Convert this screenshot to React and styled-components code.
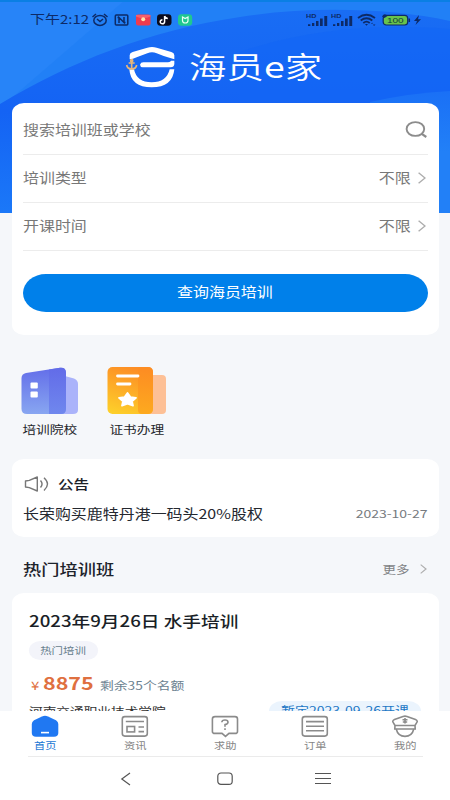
import React from "react";
import styled, { createGlobalStyle, css } from "styled-components";

const GlobalStyle = createGlobalStyle`
  * {
    box-sizing: border-box;
  }
  body {
    margin: 0;
    background: #fff;
    font-family: "Noto Sans CJK SC", "Noto Sans", sans-serif;
  }
`;

// the interface font is wide, so the text is widened from one edge
const wide = (x, origin = "left") => css`
  display: inline-block;
  white-space: nowrap;
  transform: scaleX(${x});
  transform-origin: ${origin} center;
`;

const tabs = [
  { label: "首页", icon: "home", active: true },
  { label: "资讯", icon: "news" },
  { label: "求助", icon: "help" },
  { label: "订单", icon: "orders" },
  { label: "我的", icon: "me" },
];

const filters = ["培训类型", "开课时间"];

const HeroArt = () => (
  <Art viewBox="0 0 450 213" preserveAspectRatio="none">
    <defs>
      <linearGradient id="deep" x1="0" y1="0" x2="0" y2="1">
        <stop offset="0" stopColor="#196df4" />
        <stop offset="0.5" stopColor="#1463f4" />
        <stop offset="1" stopColor="#1b78f8" />
      </linearGradient>
      <linearGradient id="corner" x1="0" y1="0" x2="0" y2="1">
        <stop offset="0" stopColor="#1a70f6" />
        <stop offset="0.5" stopColor="#2280f7" />
      </linearGradient>
    </defs>
    <rect width="450" height="213" fill="#2180f6" />
    <path d="M0 108L125 0H0Z" fill="#2784f8" />
    <path d="M0 104C70 62 150 30 240 17C310 6 390 8 450 21V213H0Z" fill="url(#deep)" />
    <path d="M240 52C310 28 380 24 450 29V100H240Z" fill="#1265f5" opacity="0.6" />
    <path d="M370 102Q410 93 450 91V213H370Z" fill="url(#corner)" />
    <rect width="450" height="2" fill="#0a7fe4" />
  </Art>
);

const StatusLeftIcons = () => (
  <svg width="102" height="16" viewBox="0 0 102 16">
    <g fill="none" stroke="#0d2a66" strokeWidth="1.5">
      <ellipse cx="9" cy="8.4" rx="6.2" ry="5" />
      <path d="M1.5 5L5 2M16.5 5L13 2M6 7L9 9.5L12 7" />
      <rect x="24.3" y="3" width="12.5" height="10" rx="1" />
      <path d="M28 11V5.5L33 10.5V5M28 5.5H26.5M33 10.5H34.5" />
    </g>
    <rect x="45" y="2.5" width="14.5" height="11" rx="2" fill="#ef3b4e" />
    <path d="M45 4.5Q52 8 59.5 4.5V3H45Z" fill="#f5606a" />
    <circle cx="52.2" cy="7.3" r="2" fill="#ffe2a8" />
    <rect x="66" y="2.3" width="14.5" height="11.4" rx="3.4" fill="#0b0b1d" />
    <path d="M73.6 4V9.7A2.2 2 0 1 1 71.4 7.8M73.6 4Q74.2 6.3 76.8 6.4" fill="none" stroke="#fff" strokeWidth="1.5" />
    <rect x="87" y="2.3" width="14.2" height="11.4" rx="3.4" fill="#1fc890" />
    <path d="M91.5 5V8.5Q91.5 11 94.2 11Q97 11 97 8.5V5L94.2 6.6Z" fill="none" stroke="#e9fff5" strokeWidth="1.2" />
  </svg>
);

const Signal = () => (
  <SignalBox>
    <HdMark>HD</HdMark>
    <svg width="21" height="12" viewBox="0 0 21 12">
      <path d="M1 11V9.3H3.3V11ZM5 11V8H7.3V11ZM9 11V6H11.5V11ZM13 11V3.5H15.7V11ZM17.3 11V1H20.2V11Z" fill="#0d2a66" />
    </svg>
  </SignalBox>
);

const WifiIcon = () => (
  <svg width="20" height="14" viewBox="0 0 20 14">
    <g fill="none" stroke="#0d2a66" strokeWidth="1.8">
      <path d="M1 5Q9.5 -1.5 18 5" />
      <path d="M3.7 7.5Q9.5 3 15.3 7.5" />
      <path d="M6.3 10Q9.5 7.3 12.7 10" />
    </g>
    <path d="M8 11H11L9.5 12.8ZM14 11L15.5 9.5V11ZM16 11.5H18.5L17 13Z" fill="#0d2a66" />
  </svg>
);

const BatteryShell = () => (
  <svg width="41" height="14" viewBox="0 0 41 14">
    <rect x="2.2" y="2.4" width="24.5" height="9.6" rx="3" fill="#68c34b" stroke="#0d2a66" strokeWidth="1.2" />
    <path d="M28.3 5.5V9" stroke="#0d2a66" strokeWidth="1.5" />
    <path d="M1 3.5Q3.5 -0.5 6.5 3L3.5 5Z" fill="#0d2a66" />
    <path d="M38 2L33 8H36L34.5 12L40 6.2H37Z" fill="#0d2a66" />
  </svg>
);

const LogoIcon = () => (
  <svg width="50" height="42" viewBox="375 140 150 126">
    <g fill="#fff">
      <path d="M389 180V168Q389 161 398 158L442 145Q456 141 470 145L514 158Q523 161 523 168V180Q492 172 470 162Q456 156 442 162L410 174Q398 180 389 180Z" />
      <path d="M420 196Q422 189 430 189H498Q511 189 513 184H523V194Q522 204 512 204H428Q421 204 420 196Z" />
      <path d="M388 210H402Q410 249 455 249Q500 249 509 210H523Q518 264 455 264Q392 264 388 210Z" />
    </g>
    <g fill="none" stroke="#e8b77a" strokeWidth="5">
      <path d="M395 188V208M386 191H404M380 197Q382 209 395 209Q408 209 410 197" />
      <circle cx="395" cy="184" r="3" />
    </g>
  </svg>
);

const SearchIcon = () => (
  <svg width="23" height="18" viewBox="0 0 23 18" fill="none" stroke="#8c8c8c">
    <ellipse cx="10.4" cy="8" rx="8.8" ry="6.9" strokeWidth="1.9" />
    <path d="M16.4 12.7L21.3 16" strokeWidth="2.2" />
  </svg>
);

const Chevron = ({ small }) => (
  <svg width={small ? 7 : 8} height={small ? 10 : 12} viewBox="0 0 8 12" fill="none" stroke="#adadad" strokeWidth="1.4">
    <path d="M0.6 0.8L7 6L0.6 11.2" />
  </svg>
);

const SchoolIcon = () => (
  <svg width="57" height="48" viewBox="0 0 57 48">
    <defs>
      <linearGradient id="school" x1="0" y1="0" x2="0" y2="1">
        <stop offset="0" stopColor="#636ee9" />
        <stop offset="1" stopColor="#88a6f1" />
      </linearGradient>
      <linearGradient id="schoolSide" x1="0" y1="0" x2="0" y2="1">
        <stop offset="0" stopColor="#626be8" />
        <stop offset="1" stopColor="#6b82ed" />
      </linearGradient>
    </defs>
    <path d="M40 8L53 11.5Q57 13 57 17V43Q57 47 52 47H40Z" fill="#aab3fa" />
    <path d="M5 6L39 0.7Q45 0 45 6V42Q45 47 40 47H6Q0.5 47 0.5 42V11Q0.5 7 5 6Z" fill="url(#school)" />
    <path d="M28 2.5L39 0.7Q45 0 45 6V42Q45 47 40 47H28Z" fill="url(#schoolSide)" opacity="0.85" />
    <rect x="9.5" y="15.5" width="7.3" height="6" rx="1" fill="#fff" />
    <rect x="9.5" y="24.5" width="7.3" height="6" rx="1" fill="#fff" />
  </svg>
);

const CertificateIcon = () => (
  <svg width="60" height="48" viewBox="0 0 60 48">
    <defs>
      <linearGradient id="cert" x1="0.5" y1="0" x2="0.2" y2="1">
        <stop offset="0" stopColor="#fd8e25" />
        <stop offset="1" stopColor="#fdcf2a" />
      </linearGradient>
      <linearGradient id="certSide" x1="0" y1="0" x2="0" y2="1">
        <stop offset="0" stopColor="#fd8c22" />
        <stop offset="1" stopColor="#fda51d" />
      </linearGradient>
    </defs>
    <path d="M40 8H55Q59 8 59 12V43Q59 47 55 47H40Z" fill="#fdc096" />
    <rect x="0.5" y="0" width="45.5" height="47" rx="5" fill="url(#cert)" />
    <path d="M31 0H41Q46 0 46 5V42Q46 47 41 47H35Q31 47 31 43Z" fill="url(#certSide)" opacity="0.85" />
    <path d="M10.5 9H31M10.5 17H23" stroke="#fff" strokeWidth="2.8" strokeLinecap="round" />
    <path d="M20.5 26L23.4 30.1L29 30.8L25 34.2L26 38.6L20.5 36.6L15 38.6L16 34.2L12 30.8L17.6 30.1Z" fill="#fff" stroke="#fff" strokeWidth="1.8" strokeLinejoin="round" />
  </svg>
);

const SpeakerIcon = () => (
  <svg width="26" height="18" viewBox="0 0 26 18" fill="none" stroke="#777" strokeWidth="1.4">
    <path d="M1.5 6L5.3 5.4L13.3 2V16L5.3 12.6L1.5 12Z" strokeLinejoin="round" />
    <path d="M16.5 5.5Q19.6 9 16.5 12.5M20 2.7Q27 9 20 15.5" />
  </svg>
);

const TabIcon = ({ name }) => {
  if (name === "home") {
    return (
      <svg width="28" height="23" viewBox="0 0 28 23">
        <path d="M3 5.3L11 1.4Q14 0.1 17 1.4L25 5.3Q27.3 6.7 27.3 9V18Q27.3 21.7 23 21.7H5Q0.8 21.7 0.8 18V9Q0.8 6.7 3 5.3Z" fill="#2078f2" />
        <path d="M10 17.6H18" stroke="#fff" strokeWidth="1.6" />
      </svg>
    );
  }
  return (
    <svg width="28" height="23" viewBox="0 0 28 23" fill="none" stroke="#8b8b8b" strokeWidth="1.6">
      {name === "news" && (
        <>
          <rect x="1.3" y="1.6" width="25" height="19.5" rx="2.5" />
          <path d="M4.8 6.5H23M17.5 12H23M17.5 16.6H23" />
          <rect x="6" y="11.5" width="7.6" height="5.4" />
        </>
      )}
      {name === "help" && (
        <>
          <path d="M4 1.6H24Q26.5 1.6 26.5 4V16.4Q26.5 18.4 24 18.4H18L14.5 21.4L11 18.4H4Q1.4 18.4 1.4 16.4V4Q1.4 1.6 4 1.6Z" />
          <path d="M10.8 7.2Q11 5 14 5Q17 5 17 7.2Q17 9 14 9.6V11.7M14 13.2V15" />
        </>
      )}
      {name === "orders" && (
        <>
          <rect x="1.3" y="1.6" width="25" height="19.5" rx="2.5" />
          <path d="M5 6.6H23M5 11.3H23M5 15.8H23" />
        </>
      )}
      {name === "me" && (
        <>
          <path d="M4 10.5L1.8 6.8Q1.5 5.4 3.5 4.5L12 1.4Q14 0.8 16 1.4L24.5 4.5Q26.5 5.4 26.2 6.8L24 10.5ZM4 10.5L3.8 14H24.2L24 10.5" />
          <path d="M5.2 14Q7 21.4 14 21.4Q21 21.4 22.8 14" />
          <path d="M14 3V8.5M11.5 4.8H16.5M11.8 7H16.2" />
        </>
      )}
    </svg>
  );
};

const App = () => {
  return (
    <Phone>
      <GlobalStyle />
      <Page>
        <Hero>
          <HeroArt />
          <StatusBar>
            <Clock>下午2:12</Clock>
            <StatusLeftIcons />
            <StatusRight>
              <Signal />
              <Signal />
              <WifiIcon />
              <Battery>
                <BatteryShell />
                <Charge>100</Charge>
              </Battery>
            </StatusRight>
          </StatusBar>
          <Brand>
            <LogoIcon />
            <BrandName>
              海员<BrandLetter>e</BrandLetter>家
            </BrandName>
          </Brand>
        </Hero>

        <SearchCard>
          <FormRow>
            <FieldText>搜索培训班或学校</FieldText>
            <SearchIcon />
          </FormRow>
          {filters.map((name) => (
            <FormRow key={name}>
              <FieldText>{name}</FieldText>
              <FieldValue>
                <ValueText>不限</ValueText>
                <Chevron />
              </FieldValue>
            </FormRow>
          ))}
          <SearchButton>
            <ButtonText>查询海员培训</ButtonText>
          </SearchButton>
        </SearchCard>

        <Shortcuts>
          <Shortcut>
            <SchoolIcon />
            <ShortcutLabel>培训院校</ShortcutLabel>
          </Shortcut>
          <Shortcut>
            <CertificateIcon />
            <ShortcutLabel>证书办理</ShortcutLabel>
          </Shortcut>
        </Shortcuts>

        <NoticeCard>
          <NoticeHead>
            <SpeakerIcon />
            <NoticeTitle>公告</NoticeTitle>
          </NoticeHead>
          <NoticeRow>
            <NoticeText>长荣购买鹿特丹港一码头20%股权</NoticeText>
            <NoticeDate>2023-10-27</NoticeDate>
          </NoticeRow>
        </NoticeCard>

        <SectionHead>
          <SectionTitle>热门培训班</SectionTitle>
          <More>
            <MoreText>更多</MoreText>
            <Chevron small />
          </More>
        </SectionHead>

        <CourseCard>
          <CourseTitle>2023年9月26日 水手培训</CourseTitle>
          <Tag>
            <TagText>热门培训</TagText>
          </Tag>
          <PriceRow>
            <Currency>¥</Currency>
            <Price>8875</Price>
            <Remaining>剩余35个名额</Remaining>
          </PriceRow>
          <CourseFoot>
            <School>河南交通职业技术学院</School>
            <StartBadge>
              <StartText>暂定2023-09-26开课</StartText>
            </StartBadge>
          </CourseFoot>
        </CourseCard>
      </Page>

      <Footer>
        <TabBar>
          {tabs.map((tab) => (
            <Tab key={tab.icon}>
              <TabIcon name={tab.icon} />
              <TabLabel $active={tab.active}>{tab.label}</TabLabel>
            </Tab>
          ))}
        </TabBar>
        <Divider />
        <SystemNav>
          <svg width="16" height="16" viewBox="0 0 16 16">
            <path d="M12 2L3.8 8L12 14" />
          </svg>
          <svg width="16" height="16" viewBox="0 0 16 16">
            <rect x="0.8" y="2" width="14.4" height="11.4" rx="3.2" />
          </svg>
          <svg width="16" height="16" viewBox="0 0 16 16">
            <path d="M0 2.5H16M0 7.5H16M0 12.5H16" />
          </svg>
        </SystemNav>
      </Footer>
    </Phone>
  );
};

const Phone = styled.div`
  width: 450px;
  height: 800px;
  display: flex;
  flex-direction: column;
  overflow: hidden;
  background: #fff;
`;

const Page = styled.main`
  height: 711px;
  overflow: hidden;
  background: #f5f7fa;
`;

const Hero = styled.header`
  position: relative;
  height: 213px;
`;

const Art = styled.svg`
  position: absolute;
  inset: 0;
  width: 100%;
  height: 100%;
`;

const StatusBar = styled.div`
  position: relative;
  display: flex;
  align-items: center;
  height: 39px;
  padding: 0 28px 0 30px;
`;

const Clock = styled.span`
  ${wide(1.25)}
  width: 61px;
  margin-top: -1px;
  font-size: 12px;
  line-height: 16px;
  color: #0d2a66;
`;

const StatusRight = styled.div`
  display: flex;
  align-items: center;
  gap: 4px;
  margin-left: auto;
`;

const SignalBox = styled.div`
  position: relative;
  display: flex;
  height: 14px;
  align-items: flex-end;
`;

const HdMark = styled.span`
  ${wide(1.3)}
  position: absolute;
  left: -1px;
  top: 0;
  font: bold 5.5px/6px "Liberation Sans", sans-serif;
  color: #0d2a66;
`;

const Battery = styled.div`
  position: relative;
  display: flex;
`;

const Charge = styled.span`
  ${wide(1.25)}
  position: absolute;
  left: 6px;
  top: 3px;
  font: 8px/9px "Liberation Sans", sans-serif;
  color: #0d3a3a;
`;

const Brand = styled.div`
  position: relative;
  display: flex;
  align-items: center;
  gap: 14px;
  height: 56px;
  padding-left: 125px;
`;

const BrandName = styled.h1`
  ${wide(1.27)}
  margin: -4px 0 0;
  font-size: 29.5px;
  line-height: 40px;
  font-weight: 350;
  color: #fff;
`;

const BrandLetter = styled.span`
  font-weight: 400;
`;

const Card = styled.section`
  position: relative;
  margin: 0 11px 0 12px;
  border-radius: 12px / 10px;
  background: #fff;
`;

const SearchCard = styled(Card)`
  height: 232px;
  margin-top: -110px;
  padding: 4px 11px 0;
`;

const FormRow = styled.div`
  display: flex;
  align-items: center;
  justify-content: space-between;
  height: 48px;
  padding-bottom: 2px;
  border-bottom: 1px solid #ececec;
`;

const FieldText = styled.span`
  ${wide(1.2)}
  font-size: 13.3px;
  color: #777;
`;

const FieldValue = styled.div`
  display: flex;
  align-items: center;
  gap: 7px;
  padding-right: 2px;
`;

const ValueText = styled.span`
  ${wide(1.2, "right")}
  font-size: 13.3px;
  color: #777;
`;

const SearchButton = styled.button`
  width: 100%;
  height: 38px;
  margin-top: 23px;
  padding: 0 2px 3px 0;
  border: 0;
  border-radius: 23px / 19px;
  background: #0080ea;
  font-family: inherit;
`;

const ButtonText = styled.span`
  ${wide(1.2, "center")}
  font-size: 13.3px;
  line-height: 18px;
  color: #fff;
`;

const Shortcuts = styled.nav`
  display: flex;
  gap: 29px;
  height: 124px;
  padding: 32px 21px 0;
`;

const Shortcut = styled.div`
  display: flex;
  flex-direction: column;
  align-items: center;
`;

const ShortcutLabel = styled.span`
  ${wide(1.2, "center")}
  margin-top: 6px;
  font-size: 11.4px;
  line-height: 16px;
  color: #24262b;
`;

const NoticeCard = styled(Card)`
  height: 78px;
  padding: 14px 12px 0 11px;
`;

const NoticeHead = styled.div`
  display: flex;
  align-items: center;
  gap: 8px;
  height: 22px;
  padding-left: 1px;
`;

const NoticeTitle = styled.h2`
  ${wide(1.2)}
  margin: -1px 0 0;
  font-size: 13px;
  line-height: 18px;
  font-weight: 500;
  color: #1a2029;
`;

const NoticeRow = styled.div`
  display: flex;
  align-items: center;
  justify-content: space-between;
  height: 36px;
`;

const NoticeText = styled.span`
  ${wide(1.2)}
  font-size: 13.3px;
  color: #24282f;
`;

const NoticeDate = styled.span`
  ${wide(1.25, "right")}
  font-size: 11.2px;
  color: #777b80;
`;

const SectionHead = styled.div`
  display: flex;
  align-items: center;
  justify-content: space-between;
  height: 56px;
  padding: 7px 23px 0;
`;

const SectionTitle = styled.h2`
  ${wide(1.2)}
  margin: -2px 0 0;
  font-size: 15.2px;
  line-height: 22px;
  font-weight: 500;
  color: #1d232b;
`;

const More = styled.div`
  display: flex;
  align-items: center;
  gap: 10px;
`;

const MoreText = styled.span`
  ${wide(1.2, "right")}
  font-size: 11.3px;
  color: #808285;
`;

const CourseCard = styled(Card)`
  height: 160px;
  padding: 16px 18px 0 17px;
`;

const CourseTitle = styled.h3`
  ${wide(1.22)}
  display: block;
  width: 180px;
  margin: 0;
  font-size: 15.3px;
  line-height: 22px;
  font-weight: 500;
  color: #1a1f27;
`;

const Tag = styled.div`
  display: flex;
  align-items: center;
  justify-content: center;
  width: 69px;
  height: 19px;
  margin-top: 10px;
  padding-bottom: 1px;
  border-radius: 12px / 10px;
  background: #f3f4fa;
`;

const TagText = styled.span`
  ${wide(1.2, "center")}
  font-size: 9.5px;
  line-height: 14px;
  color: #667d8c;
`;

const PriceRow = styled.div`
  display: flex;
  align-items: baseline;
  height: 24px;
  margin-top: 11px;
  padding-left: 2px;
  line-height: 24px;
`;

const Currency = styled.span`
  ${wide(1.25)}
  width: 12px;
  font-size: 12px;
  color: #e07042;
`;

const Price = styled.span`
  ${wide(1.25)}
  width: 57px;
  font-size: 17.2px;
  font-weight: 700;
  color: #df7040;
`;

const Remaining = styled.span`
  ${wide(1.2)}
  font-size: 11.5px;
  color: #6b8290;
`;

const CourseFoot = styled.div`
  display: flex;
  justify-content: space-between;
  height: 20px;
  margin-top: 6px;
`;

const School = styled.span`
  ${wide(1.2)}
  font-size: 11.4px;
  line-height: 20px;
  color: #333;
`;

const StartBadge = styled.div`
  display: flex;
  justify-content: center;
  width: 152px;
  height: 20px;
  border-radius: 13px / 10px;
  background: #ebf4fd;
`;

const StartText = styled.span`
  ${wide(1.21, "center")}
  font-size: 11.6px;
  line-height: 19px;
  color: #1c77c5;
`;

const Footer = styled.footer`
  height: 89px;
  background: #fff;
`;

const TabBar = styled.nav`
  display: grid;
  grid-template-columns: repeat(5, 1fr);
  height: 45px;
  padding-top: 4px;
`;

const Tab = styled.div`
  display: flex;
  flex-direction: column;
  align-items: center;
`;

const TabLabel = styled.span`
  ${wide(1.2, "center")}
  font-size: 9.4px;
  line-height: 14px;
  color: ${(props) => (props.$active ? "#2378d4" : "#858585")};
`;

const Divider = styled.div`
  height: 1px;
  margin: 0 27px 0 28px;
  background: #ebebeb;
`;

const SystemNav = styled.div`
  display: flex;
  justify-content: space-between;
  align-items: center;
  height: 43px;
  padding: 0 119px 0 118px;

  svg {
    fill: none;
    stroke: #555;
    stroke-width: 1.2;
  }
`;

export default App;
